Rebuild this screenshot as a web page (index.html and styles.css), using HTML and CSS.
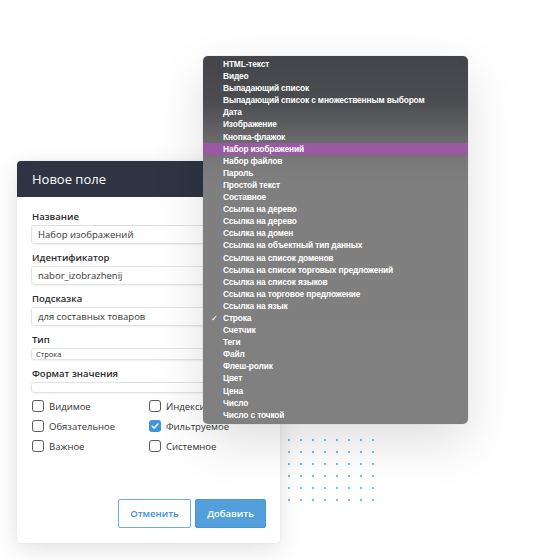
FILE: index.html
```html
<!DOCTYPE html>
<html lang="ru">
<head>
    <meta charset="UTF-8">
    <title>Новое поле</title>
    <link rel="stylesheet" href="styles.css">
</head>
<body>
    <div class="scene">
        <!-- Сетка из точек под меню -->
        <div class="dots">
            <span></span><span></span><span></span><span></span><span></span><span></span><span></span><span></span>
            <span></span><span></span><span></span><span></span><span></span><span></span><span></span><span></span>
            <span></span><span></span><span></span><span></span><span></span><span></span><span></span><span></span>
            <span></span><span></span><span></span><span></span><span></span><span></span><span></span><span></span>
            <span></span><span></span><span></span><span></span><span></span><span></span><span></span><span></span>
            <span></span><span></span><span></span><span></span><span></span><span></span><span></span><span></span>
        </div>

        <!-- Окно добавления поля -->
        <div class="dialog">
            <div class="dialog-header">Новое поле</div>
            <div class="dialog-body">
                <label class="field-label">Название</label>
                <div class="input">Набор изображений</div>
                <label class="field-label">Идентификатор</label>
                <div class="input">nabor_izobrazhenij</div>
                <label class="field-label">Подсказка</label>
                <div class="input">для составных товаров</div>
                <label class="field-label">Тип</label>
                <div class="input input-small">Строка</div>
                <label class="field-label">Формат значения</label>
                <div class="input input-empty"></div>

                <div class="checks">
                    <div class="check"><span class="box"></span>Видимое</div>
                    <div class="check"><span class="box"></span>Индексируемое</div>
                    <div class="check"><span class="box"></span>Обязательное</div>
                    <div class="check"><span class="box checked"><svg viewBox="0 0 12 12" width="12" height="12"><path d="M3.2 6.2 L5.2 8.1 L8.9 4.1" fill="none" stroke="#fff" stroke-width="1.5" stroke-linecap="round" stroke-linejoin="round"/></svg></span>Фильтруемое</div>
                    <div class="check"><span class="box"></span>Важное</div>
                    <div class="check"><span class="box"></span>Системное</div>
                </div>

                <div class="buttons">
                    <button class="btn btn-cancel">Отменить</button>
                    <button class="btn btn-add">Добавить</button>
                </div>
            </div>
        </div>

        <!-- Выпадающий список типов -->
        <ul class="menu">
            <li>HTML-текст</li>
            <li>Видео</li>
            <li>Выпадающий список</li>
            <li>Выпадающий список с множественным выбором</li>
            <li>Дата</li>
            <li>Изображение</li>
            <li>Кнопка-флажок</li>
            <li class="active">Набор изображений</li>
            <li>Набор файлов</li>
            <li>Пароль</li>
            <li>Простой текст</li>
            <li>Составное</li>
            <li>Ссылка на дерево</li>
            <li>Ссылка на дерево</li>
            <li>Ссылка на домен</li>
            <li>Ссылка на объектный тип данных</li>
            <li>Ссылка на список доменов</li>
            <li>Ссылка на список торговых предложений</li>
            <li>Ссылка на список языков</li>
            <li>Ссылка на торговое предложение</li>
            <li>Ссылка на язык</li>
            <li class="selected">Строка</li>
            <li>Счетчик</li>
            <li>Теги</li>
            <li>Файл</li>
            <li>Флеш-ролик</li>
            <li>Цвет</li>
            <li>Цена</li>
            <li>Число</li>
            <li>Число с точкой</li>
        </ul>
    </div>
</body>
</html>
```

FILE: styles.css
```css
/* Общие */
body {
    margin: 0;
    background: #fff;
    font-family: "Open Sans", "Noto Sans", sans-serif;
}
.scene {
    position: relative;
    width: 534px;
    height: 560px;
    overflow: hidden;
}

/* Точки */
.dots {
    position: absolute;
    left: 288px;
    top: 439px;
    display: grid;
    grid-template-columns: repeat(8, 2px);
    grid-auto-rows: 2px;
    column-gap: 10px;
    row-gap: 10px;
}
.dots span {
    width: 2px;
    height: 2px;
    border-radius: 50%;
    background: #3cb2ea;
}

/* Окно */
.dialog {
    position: absolute;
    left: 17px;
    top: 161px;
    width: 263px;
    height: 382px;
    background: #fff;
    border-radius: 4px;
    box-shadow: 0 6px 24px rgba(0, 0, 0, 0.12), 0 0 2px rgba(0, 0, 0, 0.08);
    overflow: hidden;
    display: flex;
    flex-direction: column;
}
.dialog-header {
    height: 36px;
    background: #2e3442;
    color: #fff;
    font-size: 13px;
    line-height: 36px;
    padding-left: 15px;
}
.dialog-body {
    flex: 1;
    display: flex;
    flex-direction: column;
    padding: 14px 14px 15px 15px;
}
.field-label {
    display: block;
    font-size: 9.5px;
    font-weight: 600;
    color: #2b2b2b;
    line-height: 12px;
    margin-bottom: 2px;
}
.input {
    height: 19px;
    margin-left: -1px;
    margin-bottom: 8px;
    border: 1px solid #e3e3e3;
    border-radius: 3px;
    box-shadow: 0 1px 2px rgba(0, 0, 0, 0.06);
    box-sizing: border-box;
    padding-left: 6px;
    font-size: 9.5px;
    line-height: 17px;
    color: #333;
    white-space: nowrap;
}
.input-small {
    height: 12px;
    font-size: 7.5px;
    line-height: 10px;
    padding-left: 4px;
}
.input-empty {
    height: 11px;
    margin-bottom: 3px;
}

/* Флажки */
.checks {
    display: grid;
    grid-template-columns: 117px 1fr;
    grid-auto-rows: 20px;
}
.check {
    display: flex;
    align-items: center;
    gap: 5px;
    font-size: 9.5px;
    color: #333;
    white-space: nowrap;
}
.box {
    width: 12px;
    height: 12px;
    box-sizing: border-box;
    border: 1px solid #5a5a5a;
    border-radius: 3px;
    flex: none;
}
.box.checked {
    border: none;
    background: #3f95dc;
}
.box svg {
    display: block;
}

/* Кнопки */
.buttons {
    margin-top: auto;
    display: flex;
    justify-content: flex-end;
    gap: 4px;
}
.btn {
    height: 29px;
    border-radius: 2px;
    font-family: inherit;
    font-size: 9.5px;
    font-weight: 600;
    padding: 0;
}
.btn-cancel {
    width: 73px;
    background: #fff;
    border: 1px solid #6aaee2;
    color: #3d8fd3;
}
.btn-add {
    width: 71px;
    background: #529fdb;
    border: 1px solid #4a96d3;
    color: #fff;
}

/* Меню */
.menu {
    position: absolute;
    left: 203px;
    top: 56px;
    width: 265px;
    height: 368px;
    box-sizing: border-box;
    margin: 0;
    padding: 2px 0 0;
    list-style: none;
    border-radius: 5px;
    background: linear-gradient(#44454a 0, #4b4c50 45px, #797979 105px, #7f7f7f 130px, #808080);
    box-shadow: 0 18px 50px rgba(0, 0, 0, 0.13), 0 0 1px rgba(0, 0, 0, 0.3);
    font-family: "Liberation Sans", Arial, sans-serif;
    font-size: 8.4px;
    letter-spacing: -0.15px;
    font-weight: bold;
    color: #fff;
}
.menu li {
    height: 12.1px;
    line-height: 12.1px;
    padding-left: 20px;
    position: relative;
    white-space: nowrap;
}
.menu li.active {
    background: #9b58a3;
}
.menu li.selected::before {
    content: "✓";
    position: absolute;
    left: 8px;
    font-family: "DejaVu Sans", sans-serif;
    font-weight: normal;
}
```
